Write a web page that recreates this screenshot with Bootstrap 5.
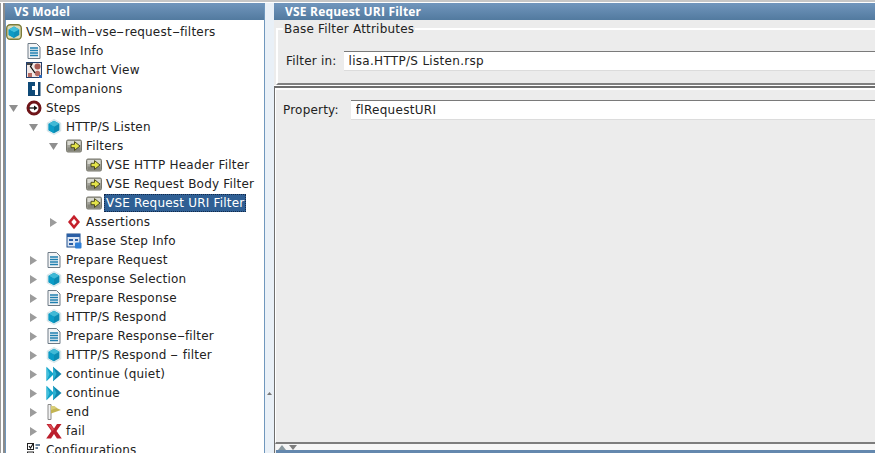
<!DOCTYPE html>
<html lang="en">
<head>
<meta charset="utf-8">
<title>VS Model</title>
<link href="https://cdn.jsdelivr.net/npm/bootstrap@5.3.0/dist/css/bootstrap.min.css" rel="stylesheet">
<style>
html,body{height:453px;overflow:hidden}
body{background:#ececec;font-family:"DejaVu Sans",sans-serif;font-size:12px;letter-spacing:.2px;color:#1a1a1a;line-height:1}
.top-strip{height:2px;background:#c6c6c6;margin-bottom:1px;box-shadow:0 1px 0 #fff}
.workspace{height:450px}
.left-rail{width:5px;flex:none;background:linear-gradient(90deg,#9a9a9a 0 1px,#fff 1px 3px,#8c8c8c 3px 5px)}
.left-pane{width:260px;flex:none;border-right:1px solid #6f97bd;overflow:hidden}
.pane-head{height:17px;background:linear-gradient(#7196bd,#527a9f);color:#fff;font-family:"Open Sans",sans-serif;font-weight:700;line-height:17px;white-space:nowrap;font-size:12px;letter-spacing:.2px}
.left-pane .pane-head{padding-left:9px}
.tree-area{background:#fff;height:433px;padding:2.5px 0 0 0;overflow:hidden;border-left:1px solid #6f97bd}
.tree-row{height:19px;white-space:nowrap;color:#222}
.tree-row svg{flex:none}
.ico{width:16px;height:16px;margin-right:4px}
.twist{width:9px;height:9px;margin:0 8px 0 3px}
.twist-gap{width:20px;flex:none}
.lv1{padding-left:0}.lv2{padding-left:20px}.lv3{padding-left:40px}.lv4{padding-left:60px}
.dash{display:inline-block;transform:scaleX(1.9);margin:0 1.8px}
.picked{background:#2f5f94;color:#fff;margin-left:-2px;padding:0 2px;height:18px;outline:1px dotted #12294a;outline-offset:-1px;display:flex;align-items:center}
.split-bar{width:9px;flex:none;background:#e9f0f7}
.split-mark{display:block;padding-top:389px;padding-left:2px}
.right-pane{flex:1 1 auto;min-width:0;overflow:hidden;display:flex;flex-direction:column}
.right-pane .pane-head{padding-left:11px}
.attr-box{margin:3px 0 0 2px;height:62px;flex:none;min-width:0;border:0;border-top:2px solid #fff;border-left:2px solid #fff;border-bottom:2px solid #808080;padding:0}
.attr-box legend{float:none;width:auto;font-size:12px;line-height:12px;margin:0 0 0 5px;padding:0 1px;color:#222;white-space:nowrap}
.field-row{color:#222}
.attr-box .field-row{padding:16px 0 0 8px;gap:7px}
.field-input.form-control{flex:1 1 auto;width:auto;height:20px;min-height:0;padding:0 5px;font-size:12px;letter-spacing:.3px;line-height:18px;font-family:inherit;color:#222;background:#fff;border:0;border-top:1px solid #7a7a7a;border-bottom:1px solid #dcdcdc;border-radius:0;box-shadow:none}
.prop-panel{flex:1 1 auto;margin-top:1px;box-shadow:0 -1px 0 #fff;border-top:2px solid #6e6e6e;border-left:1px solid #6e6e6e;background:#ececec;min-height:0}
.prop-inner{height:356px;border-top:2px solid #fff;border-left:1px solid #fff;border-bottom:2px solid #7d7d7d}
.prop-inner .field-row{padding:10px 0 0 7px;gap:12px}
.collapse-strip{background:#f6f6f6;height:6px;margin-left:1px;gap:3px;padding:1px 0 0 2px}
.next-bar{height:3px;margin-left:1px;background:#6488ae}
</style>
</head>
<body>
<svg width="0" height="0" class="d-block position-absolute">
<defs>
<symbol id="t-r" viewBox="0 0 9 9"><path d="M1 0 8 4.500 1 9z" fill="#9c9c9c"/></symbol>
<symbol id="t-d" viewBox="0 0 9 9"><path d="M0 1H9L4.500 8z" fill="#8f8f8f"/></symbol>
<symbol id="i-root" viewBox="0 0 16 16"><rect x=".7" y=".7" width="14.600" height="14.600" rx="3.500" fill="#dcdcb8" stroke="#7c7c3a" stroke-width="1.400"/><path d="M8 2.500 13.300 5.400V11L8 14 2.700 11V5.400z" fill="#0f8fb8"/><path d="M8 2.500 13.300 5.400 8 8.200 2.700 5.400z" fill="#44c0dc"/><path d="M8 8.200V14L2.700 11V5.400z" fill="#0d9bc4"/></symbol>
<symbol id="i-doc" viewBox="0 0 16 16"><path d="M2 .5H10.500L14 4V15.500H2z" fill="#f2f4f6" stroke="#6e7b86"/><path d="M4 5H12M4 7.500H12M4 10H12M4 12.500H12" stroke="#1f7fb0" stroke-width="1.500"/></symbol>
<symbol id="i-flow" viewBox="0 0 16 16"><rect x=".5" y=".5" width="15" height="15" fill="#f3e9e6" stroke="#25406b"/><circle cx="11.500" cy="4.500" r="3" fill="#a85a52"/><circle cx="11.500" cy="11.500" r="2.700" fill="#b56a62"/><path d="M1 2H6L4.500 4.500 9 11" stroke="#111" stroke-width="1.300" fill="none"/><path d="M2 11H6V15H2z" fill="#b56a62"/><rect x="13" y="13" width="3" height="3" fill="#2d67b5"/></symbol>
<symbol id="i-comp" viewBox="0 0 16 16"><path d="M2 1H9V5H6V9H9V14H2z" fill="#0e4a78"/><path d="M12 1H14.500V15H2V14H12z" fill="#15466f"/><path d="M9 1V14H12V1z" fill="#fff"/></symbol>
<symbol id="i-steps" viewBox="0 0 16 16"><circle cx="8" cy="8" r="6" fill="#fff" stroke="#6e1418" stroke-width="3"/><path d="M3 8H9" stroke="#111" stroke-width="1.300"/><path d="M8 5.500 11.500 8 8 10.500z" fill="#111"/></symbol>
<symbol id="i-cube" viewBox="0 0 16 16"><path d="M8 .4 14.800 4.100V11.900L8 15.600 1.200 11.900V4.100z" fill="#e3f0f4" stroke="#c3d6dd" stroke-width=".6"/><path d="M8 1.800 13.400 4.800V11.200L8 14.200 2.600 11.200V4.800z" fill="#0b8bb3"/><path d="M8 1.800 13.400 4.800 8 7.800 2.600 4.800z" fill="#3fb9d6"/><path d="M8 7.800V14.200L2.600 11.200V4.800z" fill="#0a9cc7"/></symbol>
<symbol id="i-filter" viewBox="0 0 16 16"><rect x=".5" y="2" width="15" height="12" rx="1.500" fill="#a3a39a" stroke="#77776d"/><rect x="1.500" y="3" width="13" height="4" fill="#d8d8d0"/><rect x="1.500" y="9.500" width="13" height="3.500" fill="#85857b"/><path d="M5 6.300H8.500V3.600L14 8 8.500 12.400V9.700H5z" fill="#e4e44a" stroke="#3f3f16" stroke-width=".9"/></symbol>
<symbol id="i-assert" viewBox="0 0 16 16"><path d="M8 .8 14 8 8 15.200 2 8z" fill="#c51f2a"/><path d="M8 4.800 10.700 8 8 11.200 5.300 8z" fill="#fff"/></symbol>
<symbol id="i-base" viewBox="0 0 16 16"><rect x="1" y="1" width="13" height="13" fill="#dce6f4" stroke="#1f4f8d"/><path d="M1 1H14V4H1z" fill="#2b5fa5"/><path d="M3 6H7V8H3zM9 6H12V8H9zM3 10H7V12H3z" fill="#2b5fa5"/><rect x="9" y="9.500" width="6.500" height="6" rx="1" fill="#2f7fd6"/></symbol>
<symbol id="i-cont" viewBox="0 0 16 16"><path d="M.5 .8 8 8 .5 15.200z" fill="#12a3c9"/><path d="M.5 .8V15.200L3.500 8z" fill="#43c0dc"/><path d="M7 .8 15.500 8 7 15.200z" fill="#0f86ad"/><path d="M7 .8V15.200L10.500 8z" fill="#2ab0d2"/></symbol>
<symbol id="i-flag" viewBox="0 0 16 16"><path d="M2 .5H5V15.500H2z" fill="#f2f2f2" stroke="#8a8a8a"/><path d="M5 1.500 15 6 5 9.500z" fill="#c3b452"/><path d="M5 2H8.500L11 4 5 6z" fill="#d8cd78"/></symbol>
<symbol id="i-fail" viewBox="0 0 16 16"><path d="M.5 1H5L8 5.500 11 1H15.500L10.500 8 15.800 15.500H11L8 11 5 15.500H.2L5.500 8z" fill="#bb1e2c"/><path d="M2 1.500H4.500L8 6.500 6.500 8z" fill="#dc4a52"/></symbol>
<symbol id="i-conf" viewBox="0 0 16 16"><rect x="1.500" y="1.500" width="6" height="6" fill="#fff" stroke="#222"/><path d="M3 4 4.500 6 7 2" stroke="#111" fill="none" stroke-width="1.200"/><rect x="1.500" y="10" width="6" height="5.500" fill="#fff" stroke="#222"/><path d="M9.500 3H14M9.500 6H12M9.500 12H14" stroke="#3a5a7a" stroke-width="1.400"/></symbol>
</defs>
</svg>

<div class="top-strip"></div>
<div class="workspace d-flex">
  <div class="left-rail"></div>
  <section class="left-pane">
    <div class="pane-head">VS Model</div>
    <div class="tree-area">
      <ul class="list-unstyled mb-0">
        <li class="tree-row d-flex align-items-center"><svg class="ico"><use href="#i-root"/></svg><span>VSM<span class="dash">-</span>with<span class="dash">-</span>vse<span class="dash">-</span>request<span class="dash">-</span>filters</span></li>
        <li class="tree-row lv1 d-flex align-items-center"><span class="twist-gap"></span><svg class="ico"><use href="#i-doc"/></svg><span>Base Info</span></li>
        <li class="tree-row lv1 d-flex align-items-center"><span class="twist-gap"></span><svg class="ico"><use href="#i-flow"/></svg><span>Flowchart View</span></li>
        <li class="tree-row lv1 d-flex align-items-center"><span class="twist-gap"></span><svg class="ico"><use href="#i-comp"/></svg><span>Companions</span></li>
        <li class="tree-row lv1 d-flex align-items-center"><svg class="twist"><use href="#t-d"/></svg><svg class="ico"><use href="#i-steps"/></svg><span>Steps</span></li>
        <li class="tree-row lv2 d-flex align-items-center"><svg class="twist"><use href="#t-d"/></svg><svg class="ico"><use href="#i-cube"/></svg><span>HTTP/S Listen</span></li>
        <li class="tree-row lv3 d-flex align-items-center"><svg class="twist"><use href="#t-d"/></svg><svg class="ico"><use href="#i-filter"/></svg><span>Filters</span></li>
        <li class="tree-row lv4 d-flex align-items-center"><span class="twist-gap"></span><svg class="ico"><use href="#i-filter"/></svg><span>VSE HTTP Header Filter</span></li>
        <li class="tree-row lv4 d-flex align-items-center"><span class="twist-gap"></span><svg class="ico"><use href="#i-filter"/></svg><span>VSE Request Body Filter</span></li>
        <li class="tree-row lv4 d-flex align-items-center"><span class="twist-gap"></span><svg class="ico"><use href="#i-filter"/></svg><span class="picked">VSE Request URI Filter</span></li>
        <li class="tree-row lv3 d-flex align-items-center"><svg class="twist"><use href="#t-r"/></svg><svg class="ico"><use href="#i-assert"/></svg><span>Assertions</span></li>
        <li class="tree-row lv3 d-flex align-items-center"><span class="twist-gap"></span><svg class="ico"><use href="#i-base"/></svg><span>Base Step Info</span></li>
        <li class="tree-row lv2 d-flex align-items-center"><svg class="twist"><use href="#t-r"/></svg><svg class="ico"><use href="#i-doc"/></svg><span>Prepare Request</span></li>
        <li class="tree-row lv2 d-flex align-items-center"><svg class="twist"><use href="#t-r"/></svg><svg class="ico"><use href="#i-cube"/></svg><span>Response Selection</span></li>
        <li class="tree-row lv2 d-flex align-items-center"><svg class="twist"><use href="#t-r"/></svg><svg class="ico"><use href="#i-doc"/></svg><span>Prepare Response</span></li>
        <li class="tree-row lv2 d-flex align-items-center"><svg class="twist"><use href="#t-r"/></svg><svg class="ico"><use href="#i-cube"/></svg><span>HTTP/S Respond</span></li>
        <li class="tree-row lv2 d-flex align-items-center"><svg class="twist"><use href="#t-r"/></svg><svg class="ico"><use href="#i-doc"/></svg><span>Prepare Response<span class="dash">-</span>filter</span></li>
        <li class="tree-row lv2 d-flex align-items-center"><svg class="twist"><use href="#t-r"/></svg><svg class="ico"><use href="#i-cube"/></svg><span>HTTP/S Respond <span class="dash">-</span> filter</span></li>
        <li class="tree-row lv2 d-flex align-items-center"><svg class="twist"><use href="#t-r"/></svg><svg class="ico"><use href="#i-cont"/></svg><span>continue (quiet)</span></li>
        <li class="tree-row lv2 d-flex align-items-center"><svg class="twist"><use href="#t-r"/></svg><svg class="ico"><use href="#i-cont"/></svg><span>continue</span></li>
        <li class="tree-row lv2 d-flex align-items-center"><svg class="twist"><use href="#t-r"/></svg><svg class="ico"><use href="#i-flag"/></svg><span>end</span></li>
        <li class="tree-row lv2 d-flex align-items-center"><svg class="twist"><use href="#t-r"/></svg><svg class="ico"><use href="#i-fail"/></svg><span>fail</span></li>
        <li class="tree-row lv1 d-flex align-items-center"><span class="twist-gap"></span><svg class="ico"><use href="#i-conf"/></svg><span>Configurations</span></li>
      </ul>
    </div>
  </section>
  <div class="split-bar">
    <span class="split-mark"><svg width="5" height="3" viewBox="0 0 5 3" class="d-block"><path d="M0 3 2.500 0 5 3z" fill="#777"/></svg></span>
  </div>
  <section class="right-pane">
    <div class="pane-head">VSE Request URI Filter</div>
    <fieldset class="attr-box">
      <legend>Base Filter Attributes</legend>
      <div class="field-row d-flex align-items-center">
        <label for="filter-in">Filter in:</label>
        <input id="filter-in" class="field-input form-control" type="text" value="lisa.HTTP/S Listen.rsp">
      </div>
    </fieldset>
    <div class="prop-panel">
      <div class="prop-inner">
        <div class="field-row d-flex align-items-center">
          <label for="prop-name">Property:</label>
          <input id="prop-name" class="field-input form-control" type="text" value="flRequestURI">
        </div>
      </div>
      <div class="collapse-strip d-flex">
        <svg width="8" height="5" viewBox="0 0 8 5"><path d="M0 5 4 0 8 5z" fill="#8b9aa0"/></svg>
        <svg width="8" height="5" viewBox="0 0 8 5"><path d="M0 0H8L4 5z" fill="#7e7e7e"/></svg>
      </div>
      <div class="next-bar"></div>
    </div>
  </section>
</div>
<script src="https://cdn.jsdelivr.net/npm/bootstrap@5.3.0/dist/js/bootstrap.bundle.min.js"></script>
</body>
</html>
